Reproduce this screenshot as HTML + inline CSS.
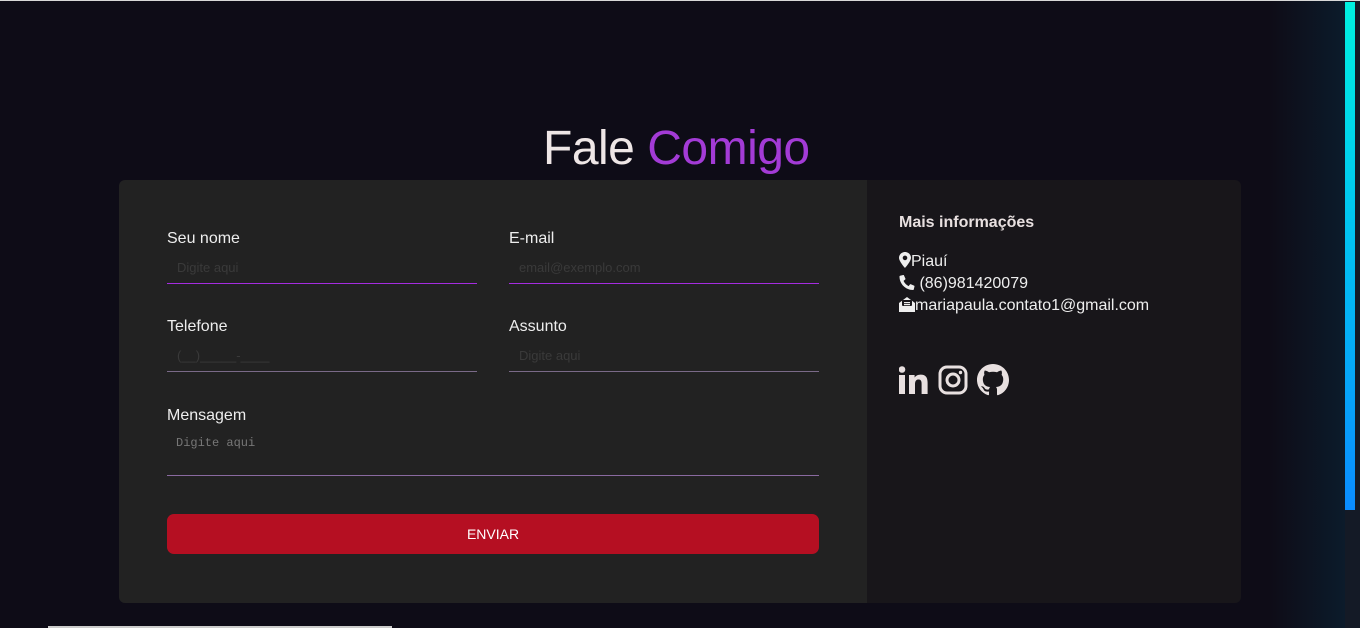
<!DOCTYPE html>
<html><head><meta charset="utf-8"><style>
*{box-sizing:border-box;margin:0;padding:0}
body{width:1360px;height:627px;overflow:hidden;background:#0e0c17;font-family:"Liberation Sans",sans-serif;position:relative;border-top:1px solid #d8d8d8}
.glow{position:absolute;left:1270px;top:0;width:76px;height:627px;background:linear-gradient(to right,rgba(14,12,23,0),rgba(10,40,60,0.55));}
.track{position:absolute;left:1345px;top:0;width:15px;height:627px;background:#141a26}
.thumb{position:absolute;left:1345px;top:1px;width:10px;height:508px;background:linear-gradient(#00f0e0,#00c8f0 40%,#0a8cff)}
h1{position:absolute;left:543px;top:120px;font-size:48px;font-weight:normal;color:#eee6e6;letter-spacing:-0.5px;white-space:nowrap}
h1 span{color:#a33bd6}
.left{position:absolute;left:119px;top:179px;width:748px;height:423px;background:#222;border-radius:6px 0 0 6px}
.right{position:absolute;left:867px;top:179px;width:374px;height:423px;background:#18161a;border-radius:0 6px 6px 0;color:#eee}
.lbl{position:absolute;color:#eee;font-size:16px}
.in{position:absolute;height:1px;background:#a52ce0}
.ph{position:absolute;color:#3a3a3a;font-size:13px}
.btn{position:absolute;left:48px;top:334px;width:652px;height:40px;background:#b50f22;border-radius:7px;color:#fff;font-size:14px;text-align:center;line-height:40px}
.right h3{position:absolute;left:32px;top:34px;font-size:16px;font-weight:bold;color:#e8e0e0}
.info{position:absolute;left:32px;top:71px;font-size:16px;line-height:22px;color:#eee}
.info svg{vertical-align:-2px}
.soc{position:absolute;left:32px;top:184px;display:flex;gap:9px;align-items:center}
.bot{position:absolute;left:48px;top:625px;width:344px;height:2px;background:#ccc}
</style></head><body>
<div class="glow"></div><div class="track"></div><div class="thumb"></div>
<h1>Fale <span>Comigo</span></h1>
<div class="left">
<div class="lbl" style="left:48px;top:50px">Seu nome</div>
<div class="ph" style="left:58px;top:80px">Digite aqui</div>
<div class="in" style="left:48px;top:103px;width:310px"></div>
<div class="lbl" style="left:390px;top:50px">E-mail</div>
<div class="ph" style="left:400px;top:80px">email@exemplo.com</div>
<div class="in" style="left:390px;top:103px;width:310px"></div>
<div class="lbl" style="left:48px;top:138px">Telefone</div>
<div class="ph" style="left:58px;top:168px">(__)_____-____</div>
<div class="in" style="left:48px;top:191px;width:310px;background:#7a6a88"></div>
<div class="lbl" style="left:390px;top:138px">Assunto</div>
<div class="ph" style="left:400px;top:168px">Digite aqui</div>
<div class="in" style="left:390px;top:191px;width:310px;background:#7a6a88"></div>
<div class="lbl" style="left:48px;top:227px">Mensagem</div>
<div class="ph" style="left:57px;top:256px;font-family:'Liberation Mono',monospace;color:#777;font-size:12px">Digite aqui</div>
<div class="in" style="left:48px;top:295px;width:652px;background:#8a6aa0"></div>
<div class="btn">ENVIAR</div>
</div>
<div class="right">
<h3>Mais informações</h3>
<div class="info">
<div><svg width="12" height="16" viewBox="0 0 12 16"><path d="M6 0C2.7 0 0 2.6 0 5.8 0 9.5 6 16 6 16s6-6.5 6-10.2C12 2.6 9.3 0 6 0zm0 8.2A2.3 2.3 0 1 1 6 3.6a2.3 2.3 0 0 1 0 4.6z" fill="#eee"/></svg>Piauí</div>
<div><svg width="16" height="15" viewBox="0 0 16 16"><path d="M15.5 11.3l-3.4-1.5a.8.8 0 0 0-.9.2l-1.5 1.8A11.3 11.3 0 0 1 4.3 6.3l1.8-1.5a.8.8 0 0 0 .2-.9L4.8.5A.8.8 0 0 0 3.9 0L.6.8A.8.8 0 0 0 0 1.6C0 9.5 6.5 16 14.4 16a.8.8 0 0 0 .8-.6l.8-3.3a.8.8 0 0 0-.5-.8z" fill="#eee"/></svg> (86)981420079</div>
<div><svg width="16" height="15" viewBox="0 0 16 15"><path d="M0 6l8-6 8 6v9H0z" fill="#eee"/><rect x="3" y="3" width="10" height="6" rx="1" fill="#18161a"/><rect x="5" y="5" width="6" height="1.2" fill="#eee"/><rect x="5" y="7" width="6" height="1.2" fill="#eee"/></svg>mariapaula.contato1@gmail.com</div>
</div>
<div class="soc">
<svg width="30" height="28" viewBox="0 0 30 28"><rect x="0" y="9" width="6" height="19" fill="#e8e0e0"/><circle cx="3" cy="3.5" r="3.3" fill="#e8e0e0"/><path d="M10 9h5.6v2.6c.9-1.6 3-3 6-3 6 0 7 3.8 7 8.8V28h-6v-9.5c0-2.3-.1-5-3-5s-3.6 2.3-3.6 4.8V28H10z" fill="#e8e0e0"/></svg>
<svg width="30" height="30" viewBox="0 0 30 30"><rect x="2" y="2" width="26" height="26" rx="7" fill="none" stroke="#e8e0e0" stroke-width="3"/><circle cx="15" cy="15" r="6" fill="none" stroke="#e8e0e0" stroke-width="3"/><circle cx="22.5" cy="7.5" r="1.7" fill="#e8e0e0"/></svg>
<svg width="32" height="32" viewBox="0 0 16 16"><path fill="#e8e0e0" d="M8 0C3.58 0 0 3.580 0 8c0 3.54 2.29 6.53 5.47 7.59.4.07.55-.17.55-.38 0-.19-.01-.82-.01-1.490-2.010.37-2.53-.49-2.69-.94-.09-.23-.48-.94-.82-1.13-.28-.15-.68-.52-.01-.53.63-.01 1.080.58 1.230.82.72 1.21 1.87.87 2.33.66.07-.52.28-.87.51-1.07-1.78-.2-3.64-.89-3.64-3.95 0-.87.31-1.59.82-2.15-.08-.2-.36-1.02.08-2.12 0 0 .67-.21 2.2.82.64-.18 1.32-.27 2-.27.68 0 1.36.09 2 .27 1.53-1.04 2.2-.82 2.2-.82.44 1.1.16 1.92.08 2.12.51.56.82 1.27.82 2.15 0 3.07-1.87 3.75-3.65 3.95.29.25.54.73.54 1.48 0 1.07-.01 1.93-.01 2.2 0 .21.15.46.55.38A8.013 8.013 0 0 0 16 8c0-4.42-3.58-8-8-8z"/></svg>
</div>
</div>
<div class="bot"></div>
</body></html>
